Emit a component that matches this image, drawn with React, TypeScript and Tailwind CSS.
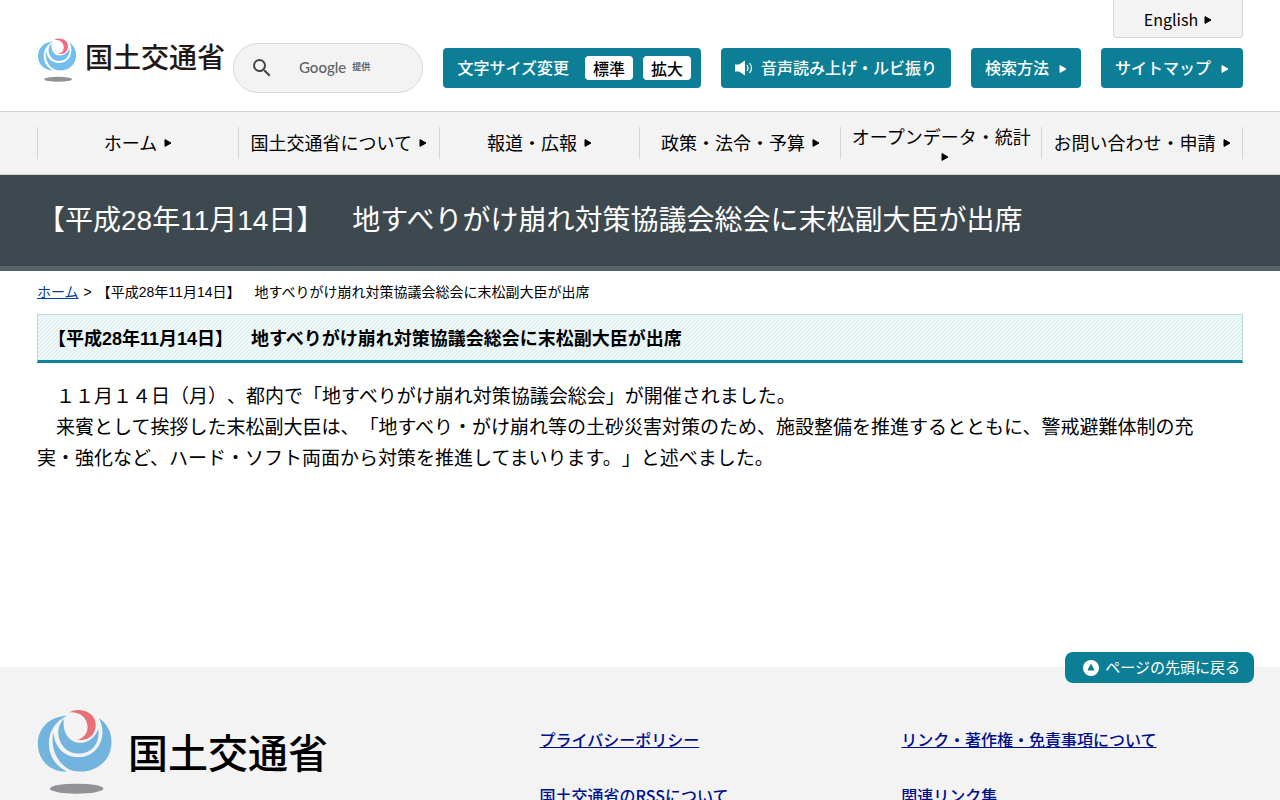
import React, { useState } from 'react';
import clsx from 'clsx';

const PAGE_TITLE = '【平成28年11月14日】　地すべりがけ崩れ対策協議会総会に末松副大臣が出席';

const PARAGRAPHS = [
  '　１１月１４日（月）、都内で「地すべりがけ崩れ対策協議会総会」が開催されました。',
  '　来賓として挨拶した末松副大臣は、「地すべり・がけ崩れ等の土砂災害対策のため、施設整備を推進するとともに、警戒避難体制の充実・強化など、ハード・ソフト両面から対策を推進してまいります。」と述べました。',
];

const NAV_ITEMS = [
  'ホーム',
  '国土交通省について',
  '報道・広報',
  '政策・法令・予算',
  'オープンデータ・統計',
  'お問い合わせ・申請',
];

const FOOTER_LINKS = [
  'プライバシーポリシー',
  'リンク・著作権・免責事項について',
  '国土交通省のRSSについて',
  '関連リンク集',
];

const Arrow: React.FC<{ className?: string }> = ({ className }) => (
  <svg viewBox="0 0 8 10" className={clsx('mt-0.5 h-2.5 w-2 shrink-0', className)} aria-hidden="true">
    <path d="M1 1.6 L7 5 L1 8.4 Z" fill="currentColor" stroke="currentColor" strokeWidth="1" strokeLinejoin="round" />
  </svg>
);

interface EmblemProps {
  className?: string;
  blue: string;
  red: string;
}

const Emblem: React.FC<EmblemProps> = ({ className, blue, red }) => (
  <svg viewBox="55 58 221 254" className={className} aria-hidden="true">
    <g fill={blue}>
      <path d="M143 78 C92 80 56 114 56 162 C56 212 94 247 143 245 C108 227 89 198 89 160 C89 124 110 93 143 78 Z" />
      <path d="M102 127 C93 176 114 224 157 242 C218 256 276 220 276 157 C276 124 260 99 238 85 C252 110 252 138 242 160 C229 188 205 202 176 202 C136 202 106 174 102 127 Z" />
      <path d="M134 88 C115 105 111 137 127 163 C142 187 166 193 190 190 C222 185 242 155 237 116 C228 143 207 159 181 159 C147 158 128 124 134 88 Z" />
    </g>
    <path d="M148 68 C182 50 229 66 229 105 C229 136 205 155 174 150 C195 145 207 127 204 106 C201 82 180 65 148 68 Z" fill={red} />
    <ellipse cx="172" cy="296" rx="80" ry="15" fill="#919196" />
  </svg>
);

const SearchBox: React.FC = () => {
  const [query, setQuery] = useState('');

  return (
    <form
      role="search"
      onSubmit={(e) => e.preventDefault()}
      className="relative flex h-[50px] min-w-0 flex-1 items-center rounded-full border border-[#d9d9d9] bg-[#f3f3f3] pr-5 pl-4"
    >
      <button type="submit" aria-label="検索" className="shrink-0 text-[#444]">
        <svg viewBox="0 0 24 24" className="h-6 w-6" fill="currentColor">
          <path d="M15.5 14h-.79l-.28-.27A6.47 6.47 0 0 0 16 9.5 6.5 6.5 0 1 0 9.5 16c1.61 0 3.09-.59 4.23-1.57l.27.28v.79l5 4.99L20.49 19l-4.99-5zm-6 0C7.01 14 5 11.99 5 9.5S7.01 5 9.5 5 14 7.01 14 9.5 11.99 14 9.5 14z" />
        </svg>
      </button>
      <input
        type="text"
        aria-label="サイト内検索"
        value={query}
        onChange={(e) => setQuery(e.target.value)}
        className="h-9 w-full min-w-0 bg-transparent px-2 text-base outline-none"
      />
      {query === '' && (
        <span className="pointer-events-none absolute left-[65px] flex items-center gap-1.5 pb-0.5 text-[#5f6368]">
          <span className="font-['Lato'] text-[15px] font-medium">Google</span>
          <span className="text-[9px] font-bold">提供</span>
        </span>
      )}
    </form>
  );
};

const Header: React.FC = () => {
  const buttonStyle = 'flex h-10 shrink-0 items-center rounded bg-[#0c7f96] font-medium text-white';
  const sizeStyle = 'h-6 rounded bg-white px-2 leading-6 font-medium text-black';

  return (
    <header className="flex flex-col px-[37px] pb-[13px]">
      <a
        href="#english"
        className="flex h-[38px] w-[130px] items-center justify-center gap-1.5 self-end rounded-b border border-t-0 border-[#d5d5d5] bg-[#f3f3f3]"
      >
        English
        <Arrow />
      </a>
      <div className="flex h-[60px] items-center gap-5">
        <div className="flex flex-1 items-center gap-2">
          <a href="#home" className="flex h-[60px] shrink-0 items-start gap-2">
            <Emblem className="h-11 w-10" blue="#74bdec" red="#f16d7f" />
            <span className="text-[28px] leading-9 font-medium text-[#231815]">国土交通省</span>
          </a>
          <SearchBox />
        </div>
        <div className={clsx(buttonStyle, 'pr-2.5 pl-3.5')}>
          <span className="mr-4 pb-0.5">文字サイズ変更</span>
          <button type="button" className={clsx(sizeStyle, 'mr-2.5')}>標準</button>
          <button type="button" className={sizeStyle}>拡大</button>
        </div>
        <a href="#read-aloud" className={clsx(buttonStyle, 'gap-2 px-3.5')}>
          <svg viewBox="0 0 18 16" className="h-4 w-[18px]" aria-hidden="true">
            <path d="M0 4.5 H4 L10 0.5 V15.5 L4 11.5 H0 Z" fill="#fff" />
            <path d="M12 5 Q14 8 12 11 M14.5 3 Q18.500 8 14.5 13" fill="none" stroke="#fff" strokeWidth="1.2" />
          </svg>
          <span className="pb-0.5">音声読み上げ・ルビ振り</span>
        </a>
        <a href="#how-to-search" className={clsx(buttonStyle, 'gap-2.5 px-3.5')}>
          <span className="pb-0.5">検索方法</span>
          <Arrow />
        </a>
        <a href="#sitemap" className={clsx(buttonStyle, 'gap-2.5 px-3.5')}>
          <span className="pb-0.5">サイトマップ</span>
          <Arrow />
        </a>
      </div>
    </header>
  );
};

const GlobalNav: React.FC = () => (
  <nav className="border-y border-[#d5d5d5] bg-[#f3f3f3] px-[37px] py-[15px]">
    <ul className="grid grid-cols-6 border-l border-[#d5d5d5]">
      {NAV_ITEMS.map((item) => (
        <li key={item} className="flex h-8 items-center justify-center border-r border-[#d5d5d5] px-2 pb-0.5">
          <a href={`#${item}`} className="flex flex-wrap items-center justify-center text-lg leading-7">
            <span>{item}</span>
            <Arrow className="ml-[7px]" />
          </a>
        </li>
      ))}
    </ul>
  </nav>
);

const Footer: React.FC = () => (
  <footer className="relative bg-[#f3f3f3] px-[37px] pt-[42px] pb-10">
    <a
      href="#top"
      className="absolute -top-[15px] right-[26px] flex h-[31px] items-center gap-1.5 rounded-lg bg-[#0c7f96] pr-3.5 pl-[18px] text-[15px] text-white"
    >
      <svg viewBox="0 0 16 16" className="h-4 w-4" aria-hidden="true">
        <circle cx="8" cy="8" r="8" fill="#fff" />
        <path d="M8 4.500 L11 10 H5 Z" fill="#0c7f96" stroke="#0c7f96" strokeLinejoin="round" />
      </svg>
      ページの先頭に戻る
    </a>
    <div className="grid grid-cols-[50fr_36fr_34fr]">
      <a href="#home" className="flex items-start gap-4">
        <Emblem className="h-[85px] w-[75px]" blue="#73b4de" red="#e87078" />
        <span className="text-[40px] leading-[84px] font-medium">国土交通省</span>
      </a>
      <ul className="col-span-2 grid grid-cols-[36fr_34fr] gap-y-8 pt-[18px]">
        {FOOTER_LINKS.map((link) => (
          <li key={link}>
            <a href={`#${link}`} className="leading-6 font-medium text-[#000f8c] underline">
              {link}
            </a>
          </li>
        ))}
      </ul>
    </div>
  </footer>
);

const App: React.FC = () => (
  <div
    id="top"
    lang="ja"
    className="min-h-screen bg-white font-['Noto_Sans_CJK_JP',sans-serif] text-base text-black [text-spacing-trim:space-all]"
  >
    <Header />
    <GlobalNav />

    <div className="font-['Liberation_Sans','Noto_Sans_CJK_JP',sans-serif]">
      <div className="border-b-[5px] border-[#56636a] bg-[#3e494f] px-[37px] py-6">
        <h1 className="text-[28px] leading-[43px] text-white">{PAGE_TITLE}</h1>
      </div>

      <main className="min-h-[396px] px-[37px] pt-[11px]">
        <div className="mb-3 text-sm leading-5">
          <a href="#home" className="text-[#003c9c] underline">ホーム</a>
          <span className="mx-[5px]">&gt;</span>
          {PAGE_TITLE}
        </div>
        <h2 className="border border-b-[3px] border-[#bed9de] border-b-[#0c839b] bg-[linear-gradient(135deg,#e2f1f2_45%,#fff_45%_55%,#e2f1f2_55%)] bg-[length:4px_4px] px-2.5 pt-2.5 pb-1.5 text-lg leading-[29px] font-bold">
          {PAGE_TITLE}
        </h2>
        <div className="mt-[18px] pr-8 text-[19px] leading-[31px]">
          {PARAGRAPHS.map((text) => (
            <p key={text}>{text}</p>
          ))}
        </div>
      </main>
    </div>

    <Footer />
  </div>
);

export default App;
